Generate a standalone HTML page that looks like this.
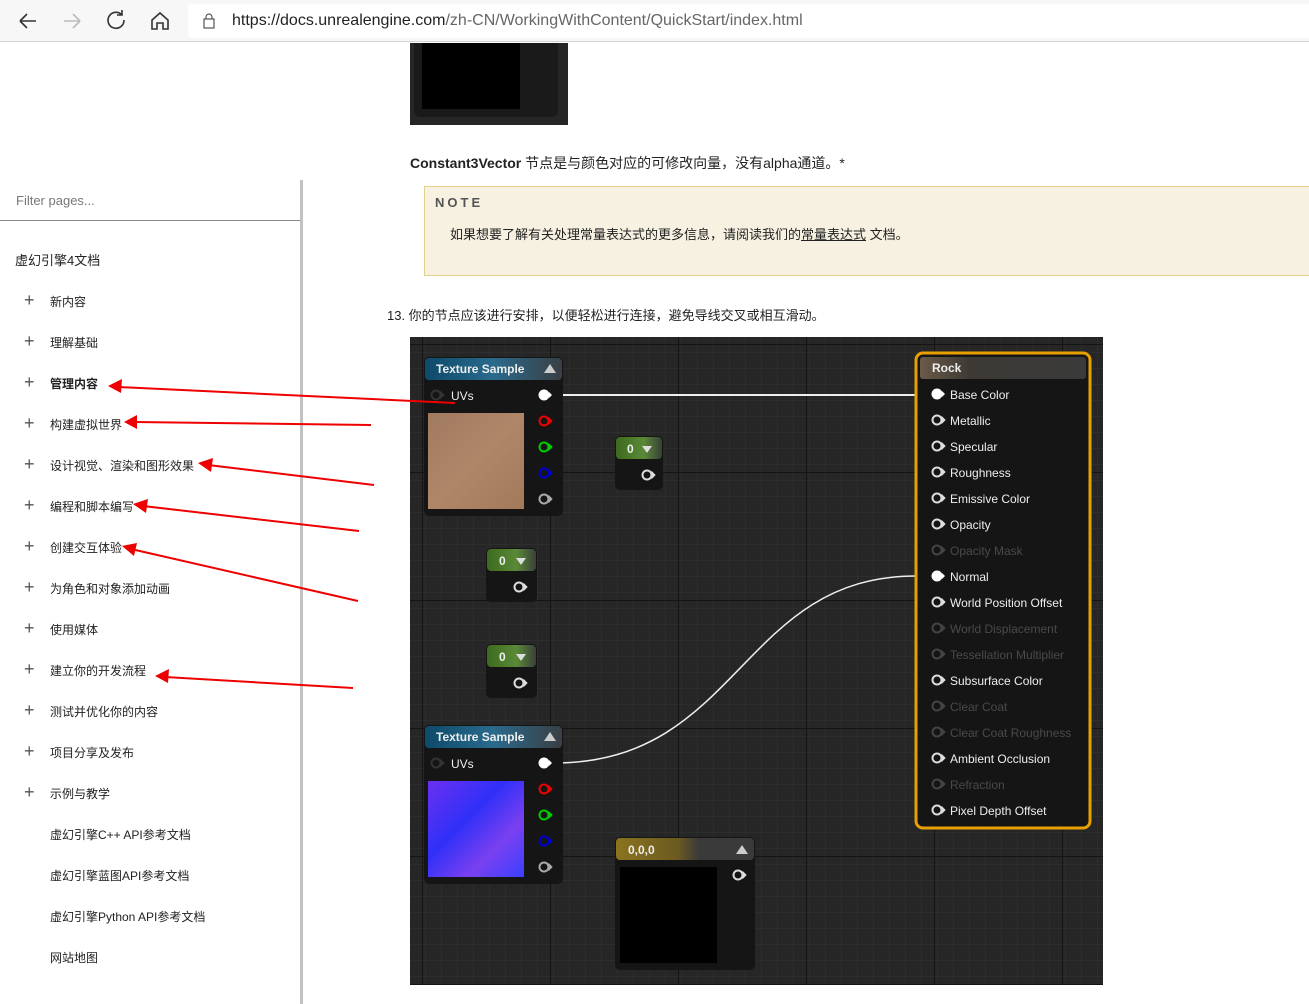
<!DOCTYPE html>
<html><head><meta charset="utf-8"><style>
*{margin:0;padding:0;box-sizing:border-box}
body{width:1309px;height:1004px;overflow:hidden;background:#fff;font-family:"Liberation Sans","Noto Sans CJK SC",sans-serif;position:relative;color:#222}
.abs{position:absolute}
#bar{left:0;top:0;width:1309px;height:42px;background:#f7f7f7;border-bottom:1px solid #d4d4d4}
#url{left:188px;top:4px;width:1121px;height:34px;background:#fff;border-radius:4px 0 0 4px}
.nav{font-size:20px;color:#333;top:9px}
.side{font-size:12px;color:#222}
.plus{font-size:18px;color:#555;left:24px;font-weight:300}
</style></head><body>
<div id="bar" class="abs"></div>
<div id="url" class="abs"></div>
<svg class="abs" style="left:0;top:0" width="200" height="42">
<g stroke="#333" stroke-width="1.6" fill="none">
<path d="M20 21h16M20 21l7-7M20 21l7 7"/>
<path d="M64 21h16M80 21l-7-7M80 21l-7 7" stroke="#bbb"/>
<path d="M122 15a8 8 0 1 0 2 5M122 10v5h-5"/>
<path d="M152 20l8-7 8 7v9h-5v-6h-6v6h-5z"/>
</g></svg>
<svg class="abs" style="left:202px;top:13px" width="14" height="16"><rect x="2" y="6" width="10" height="9" fill="none" stroke="#555" stroke-width="1.2"/><path d="M4 6V4a3 3 0 0 1 6 0v2" fill="none" stroke="#555" stroke-width="1.2"/></svg>
<div class="abs" style="left:232px;top:12px;font-size:16px;color:#222">https://docs.unrealengine.com<span style="color:#666">/zh-CN/WorkingWithContent/QuickStart/index.html</span></div>

<!-- top image -->
<div class="abs" style="left:410px;top:43px;width:158px;height:82px;background:#262626"></div>
<div class="abs" style="left:414px;top:43px;width:144px;height:74px;background:#1a1a1a;border-radius:0 0 6px 6px"></div>
<div class="abs" style="left:422px;top:43px;width:98px;height:66px;background:#000"></div>

<!-- sidebar -->
<div class="abs" style="left:300px;top:180px;width:3px;height:824px;background:#c2c2c2"></div>
<div class="abs" style="left:0;top:220px;width:300px;height:1px;background:#888"></div>
<div class="abs" style="left:16px;top:193px;font-size:13px;color:#777">Filter pages...</div>
<div class="abs side" style="left:15px;top:250px;font-size:13px">虚幻引擎4文档</div>
<div class="abs plus" style="top:290px">+</div><div class="abs side" style="left:50px;top:293px">新内容</div>
<div class="abs plus" style="top:331px">+</div><div class="abs side" style="left:50px;top:334px">理解基础</div>
<div class="abs plus" style="top:372px">+</div><div class="abs side" style="left:50px;top:375px;font-weight:bold">管理内容</div>
<div class="abs plus" style="top:413px">+</div><div class="abs side" style="left:50px;top:416px">构建虚拟世界</div>
<div class="abs plus" style="top:454px">+</div><div class="abs side" style="left:50px;top:457px">设计视觉、渲染和图形效果</div>
<div class="abs plus" style="top:495px">+</div><div class="abs side" style="left:50px;top:498px">编程和脚本编写</div>
<div class="abs plus" style="top:536px">+</div><div class="abs side" style="left:50px;top:539px">创建交互体验</div>
<div class="abs plus" style="top:577px">+</div><div class="abs side" style="left:50px;top:580px">为角色和对象添加动画</div>
<div class="abs plus" style="top:618px">+</div><div class="abs side" style="left:50px;top:621px">使用媒体</div>
<div class="abs plus" style="top:659px">+</div><div class="abs side" style="left:50px;top:662px">建立你的开发流程</div>
<div class="abs plus" style="top:700px">+</div><div class="abs side" style="left:50px;top:703px">测试并优化你的内容</div>
<div class="abs plus" style="top:741px">+</div><div class="abs side" style="left:50px;top:744px">项目分享及发布</div>
<div class="abs plus" style="top:782px">+</div><div class="abs side" style="left:50px;top:785px">示例与教学</div>
<div class="abs side" style="left:50px;top:826px">虚幻引擎C++ API参考文档</div>
<div class="abs side" style="left:50px;top:867px">虚幻引擎蓝图API参考文档</div>
<div class="abs side" style="left:50px;top:908px">虚幻引擎Python API参考文档</div>
<div class="abs side" style="left:50px;top:949px">网站地图</div>

<!-- content text -->
<div class="abs" style="left:410px;top:153px;font-size:14px;color:#222"><b style="font-weight:600">Constant3Vector</b> 节点是与颜色对应的可修改向量，没有alpha通道。*</div>
<div class="abs" style="left:424px;top:186px;width:890px;height:90px;background:#f6f1e1;border:1px solid #e4d08e"></div>
<div class="abs" style="left:435px;top:195px;font-size:13px;font-weight:bold;letter-spacing:3px;color:#555">NOTE</div>
<div class="abs" style="left:450px;top:224px;font-size:13px;color:#222">如果想要了解有关处理常量表达式的更多信息，请阅读我们的<u>常量表达式</u> 文档。</div>
<div class="abs" style="left:387px;top:305px;font-size:13px;color:#222">13. 你的节点应该进行安排，以便轻松进行连接，避免导线交叉或相互滑动。</div>

<!-- graph -->
<svg class="abs" style="left:410px;top:337px" width="693" height="648" font-family="Liberation Sans, sans-serif">
<defs>
<pattern id="g1" width="16" height="16" patternUnits="userSpaceOnUse"><path d="M16 0V16H0" fill="none" stroke="#343434" stroke-width="1"/></pattern>
<pattern id="g2" width="128" height="128" patternUnits="userSpaceOnUse" x="12" y="7"><path d="M0 0V128M0 0H128" fill="none" stroke="#141414" stroke-width="2"/></pattern>
<linearGradient id="hb" x1="0" x2="1"><stop offset="0" stop-color="#0e4a6a"/><stop offset=".5" stop-color="#2a6a8c"/><stop offset="1" stop-color="#3a3f44"/></linearGradient>
<linearGradient id="hg" x1="0" x2="1"><stop offset="0" stop-color="#3d6a1e"/><stop offset=".6" stop-color="#5a8a38"/><stop offset="1" stop-color="#3a3f38"/></linearGradient>
<linearGradient id="hy" x1="0" x2="1"><stop offset="0" stop-color="#8a7420"/><stop offset=".45" stop-color="#6b5a20"/><stop offset=".6" stop-color="#3a3a3a"/><stop offset="1" stop-color="#3a3a3a"/></linearGradient>
<linearGradient id="hr" x1="0" x2="1"><stop offset="0" stop-color="#6a5a48"/><stop offset=".3" stop-color="#3d3a36"/><stop offset="1" stop-color="#3a3a3a"/></linearGradient>
<linearGradient id="tex1" x1="0" y1="0" x2="1" y2="1"><stop offset="0" stop-color="#a07a60"/><stop offset=".5" stop-color="#b08668"/><stop offset="1" stop-color="#a27a5a"/></linearGradient>
<linearGradient id="tex2" x1="0" y1="0" x2="1" y2="1"><stop offset="0" stop-color="#6a30f0"/><stop offset=".4" stop-color="#3030f8"/><stop offset=".7" stop-color="#7a40f0"/><stop offset="1" stop-color="#3a40ff"/></linearGradient>
<g id="pin"><circle r="4.5" fill="none" stroke-width="2"/><path d="M5 -3L8 0L5 3z"/></g>
</defs>
<rect width="693" height="648" fill="#262626"/>
<rect width="693" height="648" fill="url(#g1)"/>
<rect width="693" height="648" fill="url(#g2)"/>
<path d="M144 58H506" stroke="#eee" stroke-width="2"/>
<path d="M144 426C330 426 330 239 506 239" stroke="#eee" stroke-width="1.5" fill="none"/>

<!-- tex sample 1 -->
<rect x="14" y="20" width="139" height="159" rx="5" fill="#151515"/>
<rect x="15" y="21" width="137" height="22" rx="4" fill="url(#hb)"/>
<text x="26" y="36" fill="#eee" font-size="12" font-weight="bold">Texture Sample</text>
<path d="M134 36l6-9 6 9z" fill="#ccc"/>
<g stroke="#333" fill="#333"><use href="#pin" x="26" y="58"/></g>
<text x="41" y="63" fill="#eee" font-size="12">UVs</text>
<rect x="18" y="76" width="96" height="96" fill="url(#tex1)"/>
<circle cx="134" cy="58" r="5.5" fill="#fff"/><path d="M139 55l3 3-3 3z" fill="#fff"/>
<g stroke="#e00" fill="#e00"><use href="#pin" x="134" y="84"/></g>
<g stroke="#0c0" fill="#0c0"><use href="#pin" x="134" y="110"/></g>
<g stroke="#00c" fill="#00c"><use href="#pin" x="134" y="136"/></g>
<g stroke="#aaa" fill="#aaa"><use href="#pin" x="134" y="162"/></g>

<!-- const nodes -->
<g transform="translate(205,99)"><rect width="48" height="54" rx="5" fill="#151515"/><rect x="1" y="1" width="46" height="22" rx="4" fill="url(#hg)"/><text x="12" y="17" fill="#eee" font-size="12" font-weight="bold">0</text><path d="M27 10h10l-5 7z" fill="#ddd"/><g stroke="#ddd" fill="#ddd"><use href="#pin" x="32" y="39"/></g></g>
<g transform="translate(76,211)"><rect width="51" height="54" rx="5" fill="#151515"/><rect x="1" y="1" width="49" height="22" rx="4" fill="url(#hg)"/><text x="13" y="17" fill="#eee" font-size="12" font-weight="bold">0</text><path d="M30 10h10l-5 7z" fill="#ddd"/><g stroke="#ddd" fill="#ddd"><use href="#pin" x="33" y="39"/></g></g>
<g transform="translate(76,307)"><rect width="51" height="54" rx="5" fill="#151515"/><rect x="1" y="1" width="49" height="22" rx="4" fill="url(#hg)"/><text x="13" y="17" fill="#eee" font-size="12" font-weight="bold">0</text><path d="M30 10h10l-5 7z" fill="#ddd"/><g stroke="#ddd" fill="#ddd"><use href="#pin" x="33" y="39"/></g></g>

<!-- tex sample 2 -->
<g transform="translate(0,368)">
<rect x="14" y="20" width="139" height="159" rx="5" fill="#151515"/>
<rect x="15" y="21" width="137" height="22" rx="4" fill="url(#hb)"/>
<text x="26" y="36" fill="#eee" font-size="12" font-weight="bold">Texture Sample</text>
<path d="M134 36l6-9 6 9z" fill="#ccc"/>
<g stroke="#333" fill="#333"><use href="#pin" x="26" y="58"/></g>
<text x="41" y="63" fill="#eee" font-size="12">UVs</text>
<rect x="18" y="76" width="96" height="96" fill="url(#tex2)"/>
<circle cx="134" cy="58" r="5.5" fill="#fff"/><path d="M139 55l3 3-3 3z" fill="#fff"/>
<g stroke="#e00" fill="#e00"><use href="#pin" x="134" y="84"/></g>
<g stroke="#0c0" fill="#0c0"><use href="#pin" x="134" y="110"/></g>
<g stroke="#00c" fill="#00c"><use href="#pin" x="134" y="136"/></g>
<g stroke="#aaa" fill="#aaa"><use href="#pin" x="134" y="162"/></g>
</g>

<!-- 0,0,0 -->
<g transform="translate(205,500)"><rect width="140" height="133" rx="5" fill="#151515"/><rect x="1" y="1" width="138" height="22" rx="4" fill="url(#hy)"/><text x="13" y="17" fill="#eee" font-size="12" font-weight="bold">0,0,0</text><path d="M121 17l6-9 6 9z" fill="#ccc"/><rect x="5" y="30" width="97" height="96" fill="#000"/><g stroke="#ddd" fill="#ddd"><use href="#pin" x="123" y="38"/></g></g>

<!-- Rock -->
<g transform="translate(506,16)">
<rect x="0" y="0" width="174" height="475" rx="7" fill="#151515" stroke="#e8a000" stroke-width="3"/>
<rect x="4" y="4" width="166" height="22" rx="3" fill="url(#hr)"/>
<text x="16" y="19" fill="#eee" font-size="12" font-weight="bold">Rock</text>
<g font-size="12">
<circle cx="21" cy="41" r="5.5" fill="#fff"/><path d="M26 38l3 3-3 3z" fill="#fff"/><text x="34" y="46" fill="#eee">Base Color</text>
<g stroke="#ddd" fill="#ddd"><use href="#pin" x="21" y="67"/><use href="#pin" x="21" y="93"/><use href="#pin" x="21" y="119"/><use href="#pin" x="21" y="145"/><use href="#pin" x="21" y="171"/><use href="#pin" x="21" y="249"/><use href="#pin" x="21" y="327"/><use href="#pin" x="21" y="405"/><use href="#pin" x="21" y="457"/></g>
<g stroke="#444" fill="#444"><use href="#pin" x="21" y="197"/><use href="#pin" x="21" y="275"/><use href="#pin" x="21" y="301"/><use href="#pin" x="21" y="353"/><use href="#pin" x="21" y="379"/><use href="#pin" x="21" y="431"/></g>
<circle cx="21" cy="223" r="5.5" fill="#fff"/><path d="M26 220l3 3-3 3z" fill="#fff"/>
<g fill="#eee"><text x="34" y="72">Metallic</text><text x="34" y="98">Specular</text><text x="34" y="124">Roughness</text><text x="34" y="150">Emissive Color</text><text x="34" y="176">Opacity</text><text x="34" y="228">Normal</text><text x="34" y="254">World Position Offset</text><text x="34" y="332">Subsurface Color</text><text x="34" y="410">Ambient Occlusion</text><text x="34" y="462">Pixel Depth Offset</text></g>
<g fill="#4a4a4a"><text x="34" y="202">Opacity Mask</text><text x="34" y="280">World Displacement</text><text x="34" y="306">Tessellation Multiplier</text><text x="34" y="358">Clear Coat</text><text x="34" y="384">Clear Coat Roughness</text><text x="34" y="436">Refraction</text></g>
</g></g>
</svg>

<!-- red arrows -->
<svg class="abs" style="left:0;top:0" width="1309" height="1004">
<g stroke="#e00" stroke-width="2" fill="#e00">
<path d="M455 403L118 387"/><path d="M108 386l14-7-1 14z" stroke="none"/>
<path d="M371 425L134 422"/><path d="M124 422l13-7v14z" stroke="none"/>
<path d="M374 485L208 465"/><path d="M198 463l15-5-2 14z" stroke="none"/>
<path d="M359 531L143 506"/><path d="M133 504l15-5-2 14z" stroke="none"/>
<path d="M358 601L131 549"/><path d="M122 546l15-3-3 13z" stroke="none"/>
<path d="M353 688L165 677"/><path d="M155 676l14-7-1 14z" stroke="none"/>
</g></svg>
</body></html>
